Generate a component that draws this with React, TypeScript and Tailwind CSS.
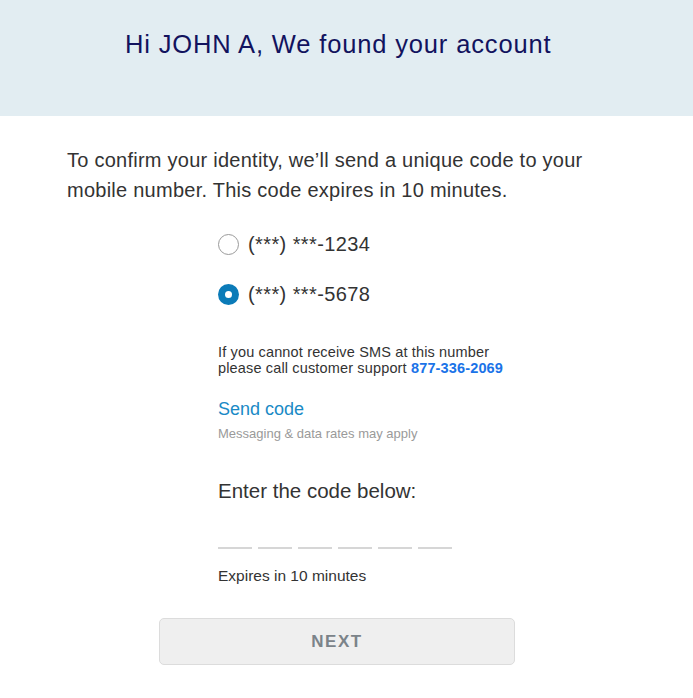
const font = { fontFamily: '"Liberation Sans", Arial, sans-serif' };

const Radio = ({ checked, label }: { checked?: boolean; label: string }) => (
  <label className="flex items-center gap-[9px] h-[24px]">
    {checked ? (
      <span className="w-[21px] h-[21px] rounded-full bg-[#0b7bb8] flex items-center justify-center">
        <span className="w-[7px] h-[7px] rounded-full bg-white" />
      </span>
    ) : (
      <span className="w-[21px] h-[21px] rounded-full border border-[#9a9a9a] bg-white" />
    )}
    <span className="text-[20px] tracking-[0.4px] text-[#333]">{label}</span>
  </label>
);

export default function App() {
  return (
    <div className="w-[693px] h-[698px] bg-white" style={font}>
      <div className="h-[116px] bg-[#e2edf2] pt-[29px] pl-[125px]">
        <h1 className="text-[25.5px] leading-[30px] tracking-[0.85px] text-[#12135e]">Hi JOHN A, We found your account</h1>
      </div>

      <p className="mt-[29px] ml-[67px] w-[530px] text-[20px] leading-[30px] tracking-[0.25px] text-[#333]">
        To confirm your identity, we’ll send a unique code to your mobile number. This code expires in 10 minutes.
      </p>

      <div className="ml-[218px] mt-[27px]">
        <div className="flex flex-col gap-[26px]">
          <Radio label="(***) ***-1234" />
          <Radio checked label="(***) ***-5678" />
        </div>

        <p className="mt-[38px] text-[14.5px] leading-[16px] tracking-[0.15px] text-[#333]">
          If you cannot receive SMS at this number
          <br />
          please call customer support <span className="font-bold text-[#1a73e8]">877-336-2069</span>
        </p>

        <a className="block mt-[22px] text-[18px] leading-[22px] text-[#1a8ac6]">Send code</a>
        <p className="mt-[6px] text-[13px] leading-[16px] text-[#9a9a9a]">Messaging &amp; data rates may apply</p>

        <p className="mt-[37px] text-[20.5px] leading-[24px] text-[#333]">Enter the code below:</p>

        <div className="mt-[44px] flex gap-[6px]">
          {[0, 1, 2, 3, 4, 5].map((i) => (
            <span key={i} className="w-[34px] h-[2px] bg-[#d6d6d6]" />
          ))}
        </div>

        <p className="mt-[18px] text-[15.5px] leading-[18px] text-[#333]">Expires in 10 minutes</p>
      </div>

      <button className="mt-[33px] ml-[159px] w-[356px] h-[47px] rounded-[5px] border border-[#dcdcdc] bg-[#efefef] text-[17px] font-bold tracking-[1.5px] text-[#7b8389]">
        NEXT
      </button>
    </div>
  );
}
